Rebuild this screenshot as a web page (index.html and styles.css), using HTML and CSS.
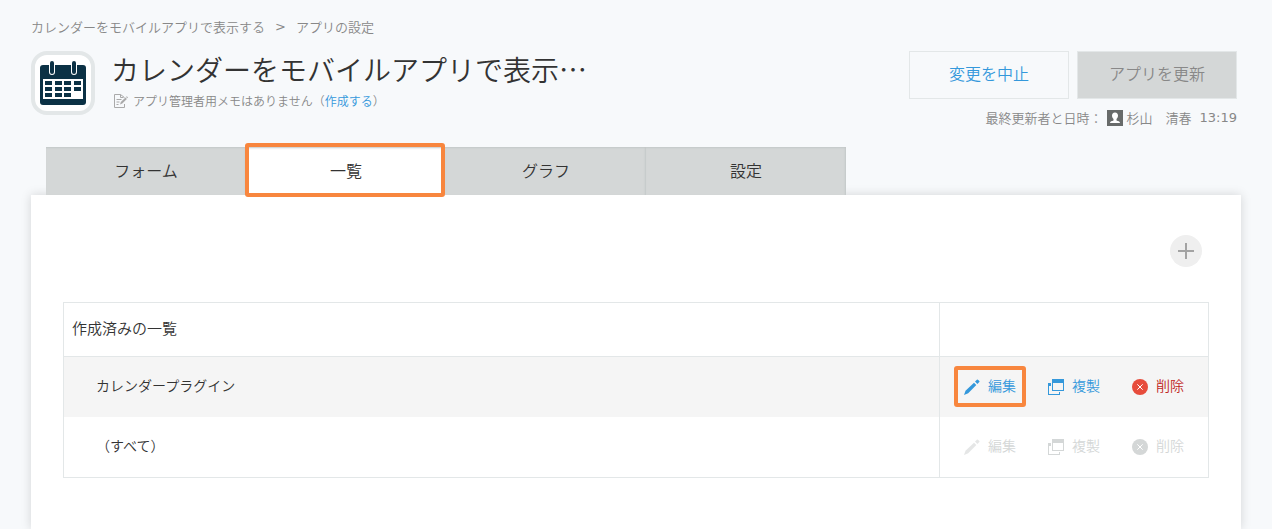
FILE: index.html
```html
<!DOCTYPE html>
<html lang="ja">
<head>
<meta charset="utf-8">
<meta name="viewport" content="width=device-width, initial-scale=1">
<title>アプリの設定</title>
<link rel="stylesheet" href="styles.css">
</head>
<body>
<svg class="sprite" aria-hidden="true">
  <symbol id="i-pencil" viewBox="0 0 16 16"><path d="M0 16l1.500-4.300L10 3.700l2.300 2.300-8.100 8.200zM11 2.600L12.900.7q.5-.5 1 0l1.400 1.400q.5.500 0 1l-1.900 1.900z"/></symbol>
  <symbol id="i-copy" viewBox="0 0 16 16"><path fill-rule="evenodd" d="M4 0h12v12H4zm1 4v7h10V4z"/><path d="M0 4h3v3H1v8h10v-2h1v3H0z"/></symbol>
  <symbol id="i-delete" viewBox="0 0 16 16"><circle cx="8" cy="8" r="8"/><path class="cross" d="M5.300 5.300l5.400 5.400M10.700 5.300l-5.400 5.400"/></symbol>
</svg>
<header class="header">
  <nav class="breadcrumb" aria-label="パンくず">
    <a href="#app">カレンダーをモバイルアプリで表示する</a>
    <span class="separator">&gt;</span>
    <span>アプリの設定</span>
  </nav>
  <div class="headline">
    <div class="app-icon">
      <svg width="46" height="44" viewBox="0 0 46 44" aria-hidden="true">
        <path fill="#0b3145" d="M3 4h40q3 0 3 3v34q0 3-3 3H3q-3 0-3-3V7q0-3 3-3z"/>
        <path fill="none" stroke="#fff" stroke-width="6" stroke-linecap="round" d="M12 2v9M34 2v9"/>
        <path fill="none" stroke="#0b3145" stroke-width="4" stroke-linecap="round" d="M12 2v9M34 2v9"/>
        <path fill="#fff" d="M3 18h40v20H3z"/>
        <path fill="#0b3145" d="M5 20h7v4H5zM15 20h7v4h-7zM24 20h7v4h-7zM34 20h7v4h-7zM5 26h7v4H5zM15 26h7v4h-7zM24 26h7v4h-7zM34 26h7v4h-7zM5 32h7v4H5zM15 32h7v4h-7zM24 32h7v4h-7z"/>
      </svg>
    </div>
    <div class="app-info">
      <h1 class="title">カレンダーをモバイルアプリで表示…</h1>
      <p class="memo">
        <svg width="14" height="14" viewBox="0 0 14 14" aria-hidden="true"><path fill="none" stroke="#aaa" d="M10.500 10v3.500H.5V.5h6l4 3M6.500.5v3h3M2.500 5.500h5M2.500 8h3M2.500 10.500h2"/><path fill="#aaa" d="M6 10.500l.8-2.500 4.700-4.500 1.400 1.400-4.600 4.700zM12 3l.8-.8 1.200 1.300-.7.800z"/></svg>
        <span>アプリ管理者用メモはありません（<a class="link" href="#memo">作成する</a>）</span>
      </p>
    </div>
    <div class="side">
      <div class="buttons">
        <button class="button" type="button">変更を中止</button>
        <button class="button button-disabled" type="button" disabled>アプリを更新</button>
      </div>
      <p class="updated">
        <span>最終更新者と日時：</span>
        <svg width="16" height="16" viewBox="0 0 16 16" aria-hidden="true"><path fill="#686b6a" d="M0 0h16v16H0z"/><path fill="#fff" d="M8 2.500c2.100 0 3 1.400 3 3.100 0 1.600-.6 2.700-1.500 3.500v1.400c1.600.5 3.500.9 3.500 2.500H3c0-1.600 1.900-2 3.500-2.500V9.100C5.600 8.300 5 7.200 5 5.600c0-1.700.9-3.100 3-3.100z"/></svg>
        <span>杉山　清春</span>
        <time class="time">13:19</time>
      </p>
    </div>
  </div>
</header>
<nav class="tabs" aria-label="設定">
  <a class="tab" href="#form">フォーム</a>
  <a class="tab tab-active marked" href="#views" aria-current="page">一覧</a>
  <a class="tab" href="#graph">グラフ</a>
  <a class="tab" href="#settings">設定</a>
</nav>
<main class="panel">
  <div class="toolbar">
    <button class="add" type="button" aria-label="追加"><svg width="16" height="16" viewBox="0 0 16 16"><path fill="#a3a3a3" d="M7 0h2v7h7v2H9v7H7V9H0V7h7z"/></svg></button>
  </div>
  <table class="views">
    <thead>
      <tr><th class="name" scope="col">作成済みの一覧</th><th class="operations" aria-label="操作"></th></tr>
    </thead>
    <tbody>
      <tr class="hovered">
        <td class="name">カレンダープラグイン</td>
        <td class="operations"><div class="actions">
          <button class="action marked" type="button"><svg><use href="#i-pencil"/></svg>編集</button>
          <button class="action" type="button"><svg><use href="#i-copy"/></svg>複製</button>
          <button class="action action-delete" type="button"><svg><use href="#i-delete"/></svg>削除</button>
        </div></td>
      </tr>
      <tr>
        <td class="name">（すべて）</td>
        <td class="operations"><div class="actions">
          <button class="action" type="button" disabled><svg class="faint"><use href="#i-pencil"/></svg>編集</button>
          <button class="action" type="button" disabled><svg><use href="#i-copy"/></svg>複製</button>
          <button class="action" type="button" disabled><svg><use href="#i-delete"/></svg>削除</button>
        </div></td>
      </tr>
    </tbody>
  </table>
</main>
</body>
</html>
```
FILE: styles.css
```css
* { box-sizing: border-box; }
body {
  margin: 0;
  min-height: 100vh;
  display: flex;
  flex-direction: column;
  background: #f7f9fb;
  color: #333;
  font-family: "Noto Sans CJK JP", "DejaVu Sans", sans-serif;
  font-weight: 350;
}
a { color: inherit; text-decoration: none; }
button { font: inherit; cursor: pointer; }
button:disabled { cursor: default; }
p, h1 { margin: 0; font-weight: inherit; }
svg { flex: none; }
.sprite { position: absolute; width: 0; height: 0; }

.header { padding: 17px 35px 0 31px; }
.breadcrumb {
  display: flex;
  gap: 10px;
  color: #888;
  font-size: 13px;
  line-height: 20px;
}
.separator, .time { font-family: "DejaVu Sans", sans-serif; font-weight: 400; }
.headline { display: flex; margin-top: 14px; }
.app-icon {
  display: flex;
  flex: none;
  align-items: center;
  justify-content: center;
  width: 64px;
  height: 64px;
  border: 4px solid #e3e7e8;
  border-radius: 16px;
  background: #fff;
}
.app-info { flex: 1; min-width: 0; padding-left: 16px; }
.title {
  font-size: 28px;
  line-height: 36px;
}
.memo {
  display: flex;
  align-items: center;
  gap: 5px;
  margin-top: 4px;
  padding-left: 3px;
  color: #888;
  font-size: 12px;
  line-height: 20px;
}
.link { color: #3498db; }
.side { display: flex; flex: none; flex-direction: column; align-items: flex-end; }
.buttons { display: flex; gap: 8px; }
.button {
  width: 160px;
  height: 48px;
  padding: 0 0 4px;
  border: 1px solid #e3e7e8;
  background: #f7f9fb;
  color: #3498db;
  font-size: 16px;
}
.button-disabled { background: #d4d7d7; color: #888; }
.updated {
  display: flex;
  align-items: center;
  margin-top: 9px;
  color: #888;
  font-size: 13px;
  line-height: 20px;
}
.updated svg { margin: 0 4px; }
.time { margin-left: 8px; }

.tabs { display: flex; padding: 0 46px; margin-top: 19px; }
.tab {
  flex: 0 1 200px;
  height: 48px;
  box-shadow: inset -1px 1px 2px #c3c8c8;
  background: #d4d7d7;
  font-size: 16px;
  line-height: 46px;
  text-align: center;
}
.tab-active { background: #fff; }
.marked { position: relative; }
.marked::after {
  position: absolute;
  inset: -9px -10px -12px;
  border: 4px solid #f8863e;
  border-radius: 3px;
  content: "";
}
.tab.marked::after { z-index: 1; inset: -4px 1px -2px -1px; }

.panel {
  flex: 1;
  margin: 0 31px;
  padding: 40px 32px 51px;
  background: #fff;
  box-shadow: 0 0 10px rgba(0, 0, 0, .15);
}
.tabs { position: relative; }
.toolbar { display: flex; justify-content: flex-end; padding-right: 7px; }
.add {
  display: grid;
  place-items: center;
  width: 32px;
  height: 32px;
  padding: 0;
  border: 0;
  border-radius: 50%;
  background: #efefef;
}
.views {
  width: 100%;
  margin-top: 35px;
  border: 1px solid #e3e7e8;
  border-spacing: 0;
  font-size: 14px;
}
.views th {
  height: 54px;
  padding: 0 8px 4px;
  border-bottom: 1px solid #e3e7e8;
  font-size: 15px;
  font-weight: inherit;
  text-align: left;
}
.views td { height: 60px; padding: 0 0 4px; }
.views td.name { padding-left: 32px; }
.views .operations { width: 269px; border-left: 1px solid #e3e7e8; }
.hovered { background: #f5f5f5; }
.actions { display: flex; gap: 32px; padding: 0 24px; }
.action {
  display: flex;
  align-items: flex-end;
  gap: 8px;
  padding: 0;
  border: 0;
  background: none;
  color: #3498db;
  line-height: 20px;
  white-space: nowrap;
}
.action svg { width: 16px; height: 16px; fill: currentColor; }
.action-delete { color: #c0261b; }
.action-delete svg { fill: #e74c3c; }
.action:disabled { color: #d4d7d7; }
.action .faint { opacity: .6; }
.cross { fill: none; stroke: #fff; stroke-width: 1; }
```
